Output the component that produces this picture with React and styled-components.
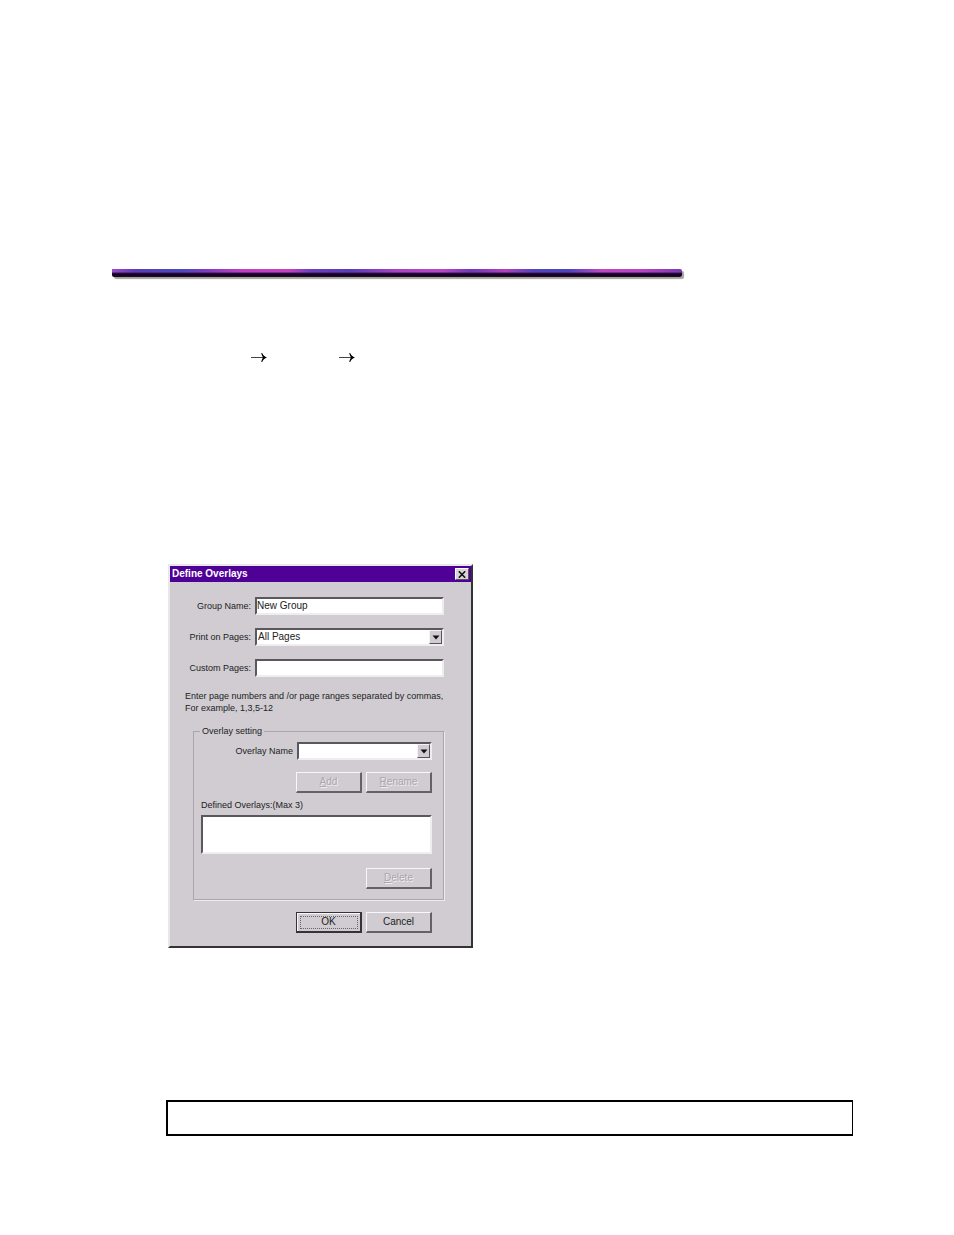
import React, { useState } from 'react'
import styled, { createGlobalStyle, css } from 'styled-components'

function Arrow() {
  return (
    <svg width="16" height="10" viewBox="0 0 16 10" aria-hidden="true">
      <path d="M0 4.5h14" stroke="#444" strokeWidth="1" />
      <path d="M10.2 0.2L11.2 0C12 2 13.6 3.8 16 4.5C13.6 5.2 12 7 11.2 9L10.2 8.8C10.6 7.2 11.2 5.8 12 4.5C11.2 3.2 10.6 1.8 10.2 0.2z" fill="#000" />
    </svg>
  )
}

function Select({ id, width, children }) {
  return (
    <SelectWrap $width={width}>
      <SelectBox id={id}>{children}</SelectBox>
      <DropArrow>
        <svg width="8" height="5" viewBox="0 0 8 5" aria-hidden="true">
          <path d="M0.5 0.5h7L4 4.5z" fill="#111" />
        </svg>
      </DropArrow>
    </SelectWrap>
  )
}

function DefineOverlays() {
  const [group, setGroup] = useState('New Group')
  const [pages, setPages] = useState('')
  return (
    <Dialog role="dialog" aria-labelledby="dialog-title">
      <TitleBar>
        <Title id="dialog-title">Define Overlays</Title>
        <CloseButton type="button" aria-label="Close">
          <svg width="8" height="7" viewBox="0 0 8 7" aria-hidden="true">
            <path d="M0.8 0.3L7.2 6.7M7.2 0.3L0.8 6.7" stroke="#111" strokeWidth="1.6" />
          </svg>
        </CloseButton>
      </TitleBar>
      <Body>
        <Fields>
          <Label htmlFor="group">Group Name:</Label>
          <TextInput id="group" value={group} onChange={e => setGroup(e.target.value)} />
          <Label htmlFor="print">Print on Pages:</Label>
          <Select id="print">
            <option>All Pages</option>
          </Select>
          <Label htmlFor="custom">Custom Pages:</Label>
          <TextInput id="custom" value={pages} onChange={e => setPages(e.target.value)} />
        </Fields>
        <Note>
          Enter page numbers and /or page ranges separated by commas,<br />
          For example, 1,3,5-12
        </Note>
        <Group>
          <Legend>Overlay setting</Legend>
          <NameRow>
            <Label htmlFor="overlay">Overlay Name</Label>
            <Select id="overlay" width="135px" />
          </NameRow>
          <ButtonRow>
            <Button type="button" disabled><span><u>A</u>dd</span></Button>
            <Button type="button" disabled><span><u>R</u>ename</span></Button>
          </ButtonRow>
          <ListLabel htmlFor="defined">Defined Overlays:(Max 3)</ListLabel>
          <ListBox id="defined" size="2" />
          <ButtonRow>
            <Button type="button" disabled><span><u>D</u>elete</span></Button>
          </ButtonRow>
        </Group>
        <Footer>
          <Button type="button" $primary><span>OK</span></Button>
          <Button type="button"><span>Cancel</span></Button>
        </Footer>
      </Body>
    </Dialog>
  )
}

function App() {
  return (
    <Page>
      <GlobalStyle />
      <Rule />
      <Steps>
        <Arrow />
        <Arrow />
      </Steps>
      <Content>
        <DefineOverlays />
        <NoteBox />
      </Content>
    </Page>
  )
}

export default App

const GlobalStyle = createGlobalStyle`
*{
  box-sizing:border-box;
}
body{
  margin:0;
  background:#fff;
}
button, input, select{
  font:inherit;
  color:inherit;
  border-radius:0;
  margin:0;
}
`
const sunken = css`
background:#fff;
border:2px solid;
border-color:#5a585a #f0edf0 #f0edf0 #5a585a;
`
const Page = styled.main`
padding:269px 101px 80px 112px;
`
const Rule = styled.hr`
max-width:570px;
height:8px;
margin:0;
border:none;
border-radius:0 2px 2px 2px;
background:
  linear-gradient(to bottom, transparent 0 3px, #3b1260 4px, #12001e 5px, #1c0c26 8px),
  linear-gradient(to right, #a04cc8, #5c3cb8 4%, #4a48c0 12%, #7a3cc0 16%, #c040c0 23%, #c840c0 31%, #6a40c0 35%, #5a3cb8 42%, #a844c4 50%, #b848c8 58%, #7038b8 63%, #b440bc 69%, #5244c0 74%, #4a44c0 80%, #c048c0 86%, #b844c4 93%, #7c38b0);
box-shadow:2px 2px 1px #a3a39c;
`
const Steps = styled.div`
display:flex;
gap:72px;
margin-top:76px;
padding-left:139px;
`
const Content = styled.div`
margin:201px 0 0 54px;
`
const Dialog = styled.section`
width:305px;
margin-left:2px;
background:#d0ccd2;
border:2px solid;
border-color:#eae7ea #343236 #343236 #eae7ea;
font:10px/12px "Liberation Sans", Arial, sans-serif;
color:#222;
`
const TitleBar = styled.header`
display:flex;
align-items:center;
justify-content:space-between;
height:16px;
padding:0 2px;
background:#4f0097;
color:#fff;
`
const Title = styled.h1`
margin:0;
font-size:10px;
font-weight:bold;
`
const CloseButton = styled.button`
display:flex;
align-items:center;
justify-content:center;
width:14px;
height:12px;
padding:0;
background:#d8d4d8;
border:1px solid;
border-color:#fff #555 #555 #fff;
`
const Body = styled.div`
padding:15px 27px 13px 15px;
`
const Fields = styled.div`
display:grid;
grid-template-columns:66px 1fr;
column-gap:4px;
row-gap:13px;
align-items:center;
`
const Label = styled.label`
font-size:9px;
text-align:right;
white-space:nowrap;
`
const TextInput = styled.input`
${sunken}
width:100%;
height:18px;
padding:0 0 1px;
outline:none;
`
const SelectWrap = styled.div`
position:relative;
width:${props => props.$width || '100%'};
`
const SelectBox = styled.select`
${sunken}
display:block;
appearance:none;
width:100%;
height:18px;
padding:0 16px 0 1px;
outline:none;
`
const DropArrow = styled.span`
position:absolute;
top:2px;
right:2px;
display:flex;
align-items:center;
justify-content:center;
width:13px;
height:14px;
background:#d0ccd2;
border:1px solid;
border-color:#f4f2f4 #555 #555 #f4f2f4;
pointer-events:none;
`
const Note = styled.p`
margin:13px 0 0;
font-size:9px;
white-space:nowrap;
`
const Group = styled.fieldset`
margin:11px 0 0 8px;
padding:5px 11px 10px 7px;
border:1px solid #aaa6ac;
box-shadow:1px 1px 0 #eeebee;
`
const Legend = styled.legend`
padding:0 2px;
margin-left:-1px;
font-size:9px;
`
const NameRow = styled.div`
display:flex;
align-items:center;
justify-content:flex-end;
gap:4px;
`
const ButtonRow = styled.div`
display:flex;
justify-content:flex-end;
gap:4px;
margin:12px 0 0;
`
const ListLabel = styled.label`
display:block;
margin:6px 0 4px;
font-size:9px;
`
const ListBox = styled.select`
${sunken}
display:block;
appearance:none;
width:100%;
height:39px;
margin-bottom:14px;
padding:0;
outline:none;
`
const Footer = styled.footer`
display:flex;
justify-content:flex-end;
gap:4px;
margin:12px 12px 0 0;
`
const Button = styled.button`
width:66px;
height:21px;
padding:0;
background:#d0ccd2;
border:solid;
border-width:1px 2px 2px 1px;
border-color:#f8f6f8 #656266 #656266 #f8f6f8;
&:disabled{
  color:#aaa6ac;
  text-shadow:1px 1px 0 #f0edf0;
}
${props => props.$primary && css`
  border-color:#333;
  outline:1px dotted #666;
  outline-offset:-5px;
  box-shadow:inset 1px 1px 0 #f8f6f8;
`}
`
const NoteBox = styled.div`
height:36px;
margin-top:152px;
border:2px solid #000;
border-right-width:1px;
`
